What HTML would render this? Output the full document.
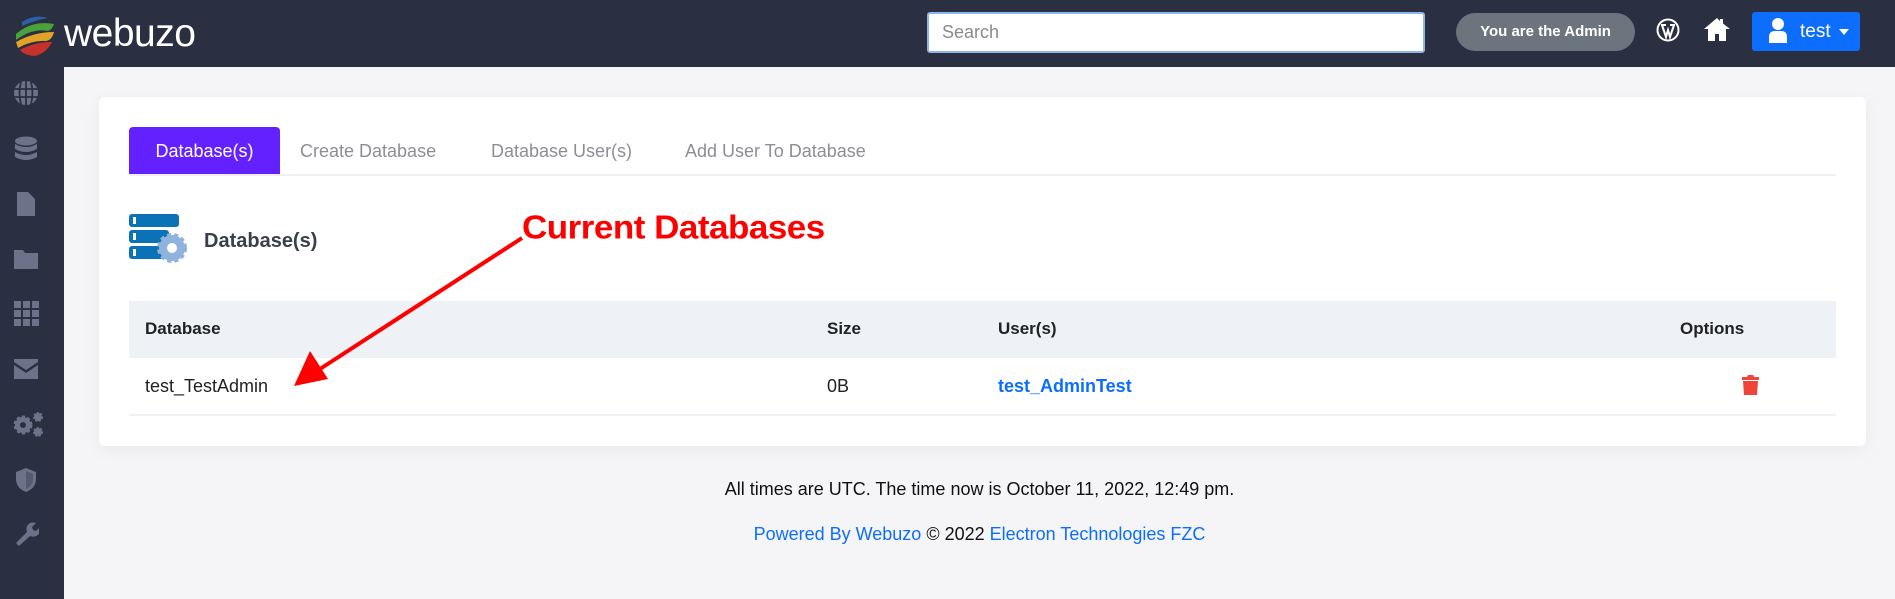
<!DOCTYPE html>
<html><head><meta charset="utf-8"><style>
*{box-sizing:border-box;margin:0;padding:0}
body{width:1895px;height:599px;overflow:hidden;background:#f5f5f8;font-family:"Liberation Sans",sans-serif;position:relative}
.a{position:absolute}
#hdr{left:0;top:0;width:1895px;height:67px;background:#2a2f42}
#side{left:0;top:67px;width:64px;height:532px;background:#2a2f42}
.si{position:absolute;left:13px;width:26px;height:26px;fill:#6c7289}
#card{left:99px;top:97px;width:1767px;height:349px;background:#fff;border-radius:6px;box-shadow:0 4px 18px rgba(0,0,0,.05)}
.tab{position:absolute;top:127px;height:48px;line-height:48px;font-size:18px;color:#8d8d95}
</style></head><body>
<div id="hdr" class="a"></div>
<svg class="a" style="left:12px;top:14px" width="48" height="44" viewBox="0 0 48 44">
<path d="M4 20 Q20 6 42 10 Q40 16 36 17 Q20 14 4 26Z" fill="#4aa33a"/>
<path d="M4 28 Q22 18 42 18 Q40 26 34 27 Q20 26 6 34Z" fill="#e3a226"/>
<path d="M8 36 Q22 28 40 28 Q34 40 22 42 Q12 41 8 36Z" fill="#c6312a"/>
<path d="M10 8 Q22 0 36 4 Q24 6 10 12Z" fill="#2c5fa8"/>
</svg>
<div class="a" style="left:64px;top:12px;font-size:39px;color:#fff;letter-spacing:-0.5px">webuzo</div>
<div class="a" style="left:927px;top:12px;width:498px;height:41px;background:#fff;border:2px solid #8fb6e6;border-radius:3px;padding-left:13px;line-height:37px;font-size:18px;color:#8a8a8a">Search</div>
<div class="a" style="left:1456px;top:13px;width:179px;height:38px;background:#6c757d;border-radius:19px;color:#fff;font-weight:bold;font-size:15px;line-height:38px;text-align:center">You are the Admin</div>
<svg class="a" style="left:1656px;top:18px" width="24" height="24" viewBox="0 0 24 24"><circle cx="12" cy="12" r="10.5" fill="none" stroke="#fff" stroke-width="2"/><path d="M5 7h5M14 7h5M6 7l4 12 2-7 2 7 4-12" fill="none" stroke="#fff" stroke-width="2"/></svg>
<svg class="a" style="left:1703px;top:16px" width="28" height="26" viewBox="0 0 28 26"><path d="M14 2 1 13h4v12h7v-7h4v7h7V13h4L20 7.5V3h-3v2z" fill="#fff"/></svg>
<div class="a" style="left:1752px;top:12px;width:108px;height:39px;background:#0d6efd;border-radius:3px"></div>
<svg class="a" style="left:1768px;top:17px" width="20" height="26" viewBox="0 0 20 26"><circle cx="10" cy="7" r="6" fill="#fff"/><path d="M1 26v-6q0-6 6-6h6q6 0 6 6v6z" fill="#fff"/></svg>
<div class="a" style="left:1800px;top:21px;color:#fff;font-size:19px">test</div>
<div class="a" style="left:1839px;top:29px;border-left:5px solid transparent;border-right:5px solid transparent;border-top:6px solid #fff"></div>

<div id="side" class="a"></div>
<svg class="si" style="top:80px" viewBox="0 0 26 26"><circle cx="13" cy="13" r="12"/><path d="M1 9h24M1 17h24M13 1v24M8 2q-3 11 0 22M18 2q3 11 0 22" stroke="#2a2f42" stroke-width="1.8" fill="none"/></svg>
<svg class="si" style="top:136px" viewBox="0 0 26 26"><ellipse cx="13" cy="5" rx="11" ry="4.5"/><path d="M2 8q11 6 22 0v5q-11 6-22 0zM2 16q11 6 22 0v5q-11 6-22 0z"/></svg>
<svg class="si" style="top:191px" viewBox="0 0 26 26"><path d="M4 1h11l7 7v17H4z"/></svg>
<svg class="si" style="top:246px" viewBox="0 0 26 26"><path d="M1 4h9l2 3h13v16H1z"/></svg>
<svg class="si" style="top:300px" viewBox="0 0 26 26"><path d="M1 1h7v7H1zM10 1h7v7h-7zM19 1h7v7h-7zM1 10h7v7H1zM10 10h7v7h-7zM19 10h7v7h-7zM1 19h7v7H1zM10 19h7v7h-7zM19 19h7v7h-7z"/></svg>
<svg class="si" style="top:356px" viewBox="0 0 26 26"><path d="M1 3h24v3L13 14 1 6zM1 9l12 8 12-8v14H1z"/></svg>
<svg class="si" style="top:411px;width:32px" viewBox="0 0 32 26"><circle cx="10" cy="14" r="8" stroke="#6c7289" stroke-width="3" stroke-dasharray="3 2.2"/><circle cx="10" cy="14" r="3" fill="#2a2f42"/><circle cx="25" cy="6" r="4" stroke="#6c7289" stroke-width="2" stroke-dasharray="2 1.5"/><circle cx="25" cy="21" r="4" stroke="#6c7289" stroke-width="2" stroke-dasharray="2 1.5"/></svg>
<svg class="si" style="top:467px" viewBox="0 0 26 26"><path d="M13 1 3 5v7q0 9 10 13 10-4 10-13V5z"/><path d="M13 4v18q7-3 7-10V7z" fill="#2a2f42" opacity=".35"/></svg>
<svg class="si" style="top:521px" viewBox="0 0 26 26"><path d="M3 22 14 11q-2-6 3-9 3-1 6 0l-4 4 1 3 3 1 4-4q1 4-1 7-4 4-9 2L6 25z"/></svg>

<div id="card" class="a"></div>
<div class="a" style="left:129px;top:127px;width:151px;height:48px;background:#6421ff;border-radius:4px 4px 0 0;color:#fff;font-size:18px;line-height:48px;text-align:center">Database(s)</div>
<div class="tab" style="left:300px">Create Database</div>
<div class="tab" style="left:491px">Database User(s)</div>
<div class="tab" style="left:685px">Add User To Database</div>
<div class="a" style="left:129px;top:174px;width:1707px;height:2px;background:#eef0f3"></div>

<svg class="a" style="left:129px;top:214px" width="60" height="52" viewBox="0 0 60 52">
<rect x="0" y="0" width="50" height="13" rx="3" fill="#0c72b8"/><rect x="0" y="16" width="40" height="13" rx="3" fill="#0c72b8"/><rect x="0" y="32" width="40" height="13" rx="3" fill="#0c72b8"/>
<rect x="4" y="3" width="3" height="7" fill="#fff"/><rect x="4" y="19" width="3" height="7" fill="#fff"/><rect x="4" y="35" width="3" height="7" fill="#fff"/>
<circle cx="43" cy="34" r="13" fill="#8fb3dc" stroke="#8fb3dc" stroke-width="4" stroke-dasharray="4 3"/><circle cx="43" cy="34" r="5" fill="#fff"/></svg>
<div class="a" style="left:204px;top:230px;font-size:20px;font-weight:bold;color:#3a3f4b">Database(s)</div>

<div class="a" style="left:129px;top:301px;width:1707px;height:57px;background:#eef1f6"></div>
<div class="a" style="left:129px;top:414px;width:1707px;height:2px;background:#eef1f6"></div>
<div class="a" style="left:145px;top:319px;font-size:17px;font-weight:bold;color:#222">Database</div>
<div class="a" style="left:827px;top:319px;font-size:17px;font-weight:bold;color:#222">Size</div>
<div class="a" style="left:998px;top:319px;font-size:17px;font-weight:bold;color:#222">User(s)</div>
<div class="a" style="left:1680px;top:319px;font-size:17px;font-weight:bold;color:#222">Options</div>
<div class="a" style="left:145px;top:376px;font-size:18px;color:#222">test_TestAdmin</div>
<div class="a" style="left:827px;top:376px;font-size:18px;color:#222">0B</div>
<div class="a" style="left:998px;top:376px;font-size:18px;font-weight:bold;color:#0d6efd">test_AdminTest</div>
<svg class="a" style="left:1742px;top:375px" width="17" height="20" viewBox="0 0 17 20"><path d="M0 2h5l1-2h5l1 2h5v3H0zM1 6h15l-1 14H2z" fill="#f04438"/></svg>

<div class="a" style="left:522px;top:208px;font-size:35px;font-weight:bold;color:#f00;letter-spacing:-0.5px;transform:scaleY(0.95)">Current Databases</div>
<svg class="a" style="left:280px;top:230px" width="250" height="170" viewBox="0 0 250 170"><line x1="242" y1="8" x2="40" y2="139" stroke="#f00" stroke-width="4"/><path d="M14 156 30 121 48 149z" fill="#f00"/></svg>

<div class="a" style="left:64px;width:1831px;top:479px;text-align:center;font-size:18px;color:#111">All times are UTC. The time now is October 11, 2022, 12:49 pm.</div>
<div class="a" style="left:64px;width:1831px;top:524px;text-align:center;font-size:18px;color:#111"><span style="color:#0d6efd">Powered By Webuzo</span> © 2022 <span style="color:#0d6efd">Electron Technologies FZC</span></div>
</body></html>
